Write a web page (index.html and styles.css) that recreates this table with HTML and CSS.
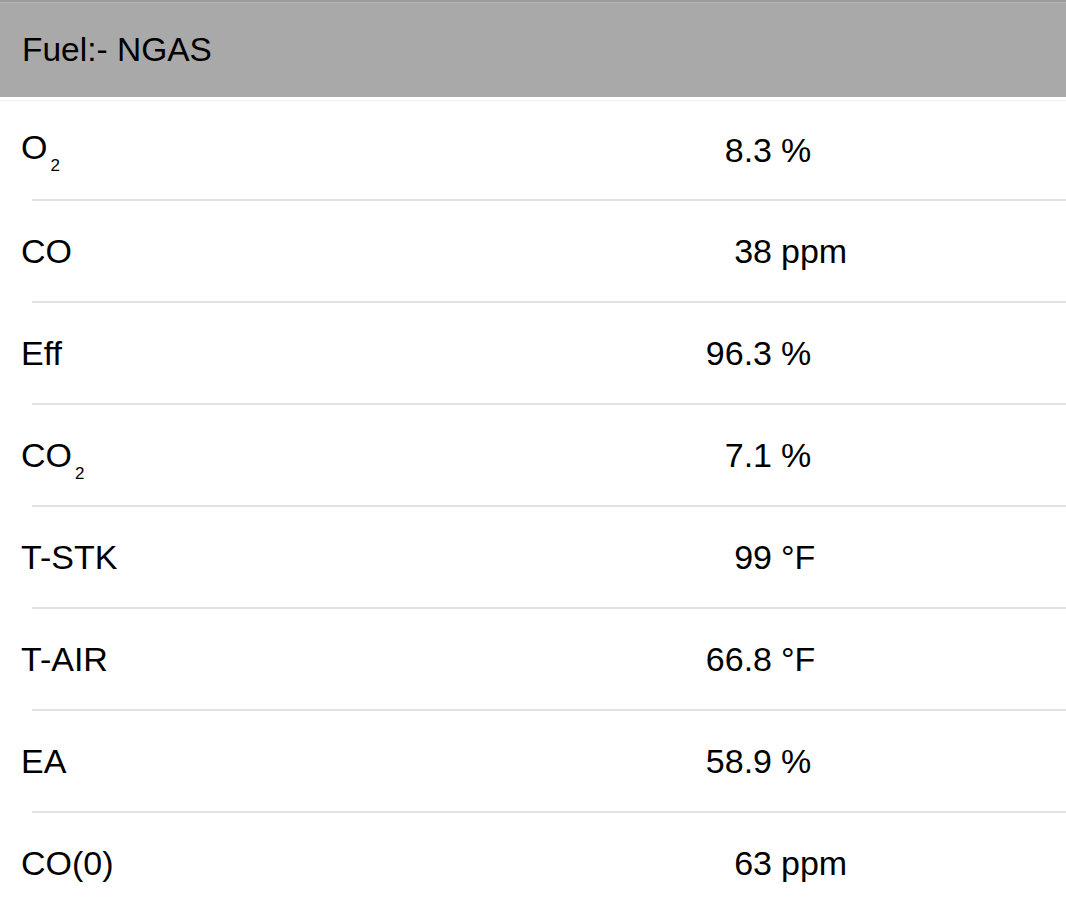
FILE: index.html
```html
<!DOCTYPE html>
<html>
<head>
<meta charset="utf-8">
<link rel="stylesheet" href="styles.css">
</head>
<body>
<div class="screen">
  <header class="header">Fuel:- NGAS</header>
  <div class="gap"></div>
  <div class="list">
    <div class="row first"><span class="label">O<span class="sub">2</span></span><span class="num">8.3</span><span class="unit">%</span></div>
    <div class="row"><span class="label">CO</span><span class="num">38</span><span class="unit">ppm</span></div>
    <div class="row"><span class="label">Eff</span><span class="num">96.3</span><span class="unit">%</span></div>
    <div class="row"><span class="label">CO<span class="sub">2</span></span><span class="num">7.1</span><span class="unit">%</span></div>
    <div class="row"><span class="label">T-STK</span><span class="num">99</span><span class="unit">°F</span></div>
    <div class="row"><span class="label">T-AIR</span><span class="num">66.8</span><span class="unit">°F</span></div>
    <div class="row"><span class="label">EA</span><span class="num">58.9</span><span class="unit">%</span></div>
    <div class="row last"><span class="label">CO(0)</span><span class="num">63</span><span class="unit">ppm</span></div>
  </div>
</div>
</body>
</html>
```
FILE: styles.css
```css
html, body {
  margin: 0;
  padding: 0;
  background: #ffffff;
}
body {
  font-family: "Liberation Sans", Arial, sans-serif;
  color: #000;
  overflow: hidden;
}
.screen {
  width: 1066px;
  height: 911px;
  overflow: hidden;
}
.header {
  height: 97px;
  box-sizing: border-box;
  background: #a9a9a9;
  border-top: 2px solid #9c9c9c;
  box-shadow: inset 0 1px 0 #b4b4b4;
  display: flex;
  align-items: center;
  padding-left: 22px;
  font-size: 33.5px;
  color: #000;
}
.gap {
  height: 3px;
  border-bottom: 1px solid #efefef;
}
.list {
  display: flex;
  flex-direction: column;
}
.row {
  height: 100px;
  display: grid;
  grid-template-columns: 600px 151px auto;
  align-items: center;
  padding-left: 21px;
  font-size: 34px;
  position: relative;
}
.row.first {
  height: 98px;
}
.row.first .label {
  margin-top: -6px;
}
.row::after {
  content: "";
  position: absolute;
  left: 32px;
  right: 0;
  bottom: -2px;
  height: 2px;
  background: #e2e2e2;
}
.row.last::after {
  display: none;
}
.row + .row {
  margin-top: 2px;
}
.num {
  text-align: right;
}
.unit {
  margin-left: 9px;
}
.sub {
  font-size: 17px;
  vertical-align: -12px;
  margin-left: 3px;
  line-height: 0;
}
```
